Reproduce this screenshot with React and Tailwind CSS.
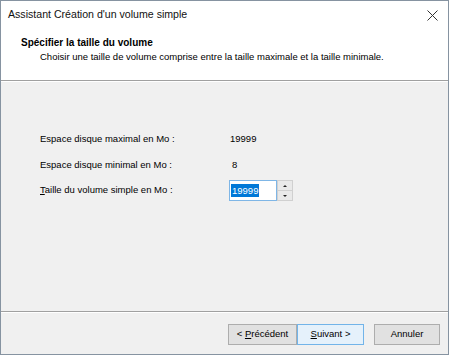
import React from "react";

const font = { fontFamily: '"Liberation Sans", Arial, sans-serif' };

function Spinner() {
  return (
    <div className="flex flex-col w-[16px] h-[21px] border border-[#d0d0d0] bg-[#e9e9e9]">
      <div className="flex-1 flex items-center justify-center border-b border-[#d0d0d0]">
        <span className="w-0 h-0 border-x-[2px] border-x-transparent border-b-[2px] border-b-[#222]" />
      </div>
      <div className="flex-1 flex items-center justify-center">
        <span className="w-0 h-0 border-x-[2px] border-x-transparent border-t-[2px] border-t-[#222]" />
      </div>
    </div>
  );
}

export default function App() {
  return (
    <div className="w-[450px] h-[355px] bg-white" style={font}>
      <div className="w-[449px] h-[355px] flex flex-col border border-[#8693a1] bg-white text-[#1a1a1a]">
        {/* title bar */}
        <div className="h-[28px] flex items-center justify-between pl-[7px] pr-[9px]">
          <span className="text-[10.6px] text-[#111]">Assistant Création d'un volume simple</span>
          <svg width="11" height="11" viewBox="0 0 11 11" className="mr-[1px]">
            <path d="M0.5 0.5 L10.5 10.5 M10.5 0.5 L0.5 10.5" stroke="#333" strokeWidth="1" />
          </svg>
        </div>

        {/* header */}
        <div className="h-[52px] pt-[7px] pl-[20px] border-b border-[#a0a0a0]">
          <p className="text-[10px] font-bold leading-[14px] text-black">Spécifier la taille du volume</p>
          <p className="text-[9.5px] leading-[14px] pl-[19px] text-black">
            Choisir une taille de volume comprise entre la taille maximale et la taille minimale.
          </p>
        </div>

        {/* body */}
        <div className="flex-1 bg-[#f0f0f0] border-t border-white border-b border-b-[#a0a0a0] pl-[39px] pt-[50px] text-[9.5px] text-black">
          <div className="flex items-center h-[14px]">
            <span className="w-[190px]">Espace disque maximal en Mo :</span>
            <span>19999</span>
          </div>
          <div className="flex items-center h-[14px] mt-[12px]">
            <span className="w-[192px]">Espace disque minimal en Mo :</span>
            <span>8</span>
          </div>
          <div className="flex items-center mt-[8px]">
            <span className="w-[189px]">
              <span className="underline">T</span>aille du volume simple en Mo :
            </span>
            <div className="flex">
              <div className="w-[48px] h-[21px] bg-white border border-[#7fb6e6] flex items-center pl-[1px]">
                <span className="bg-[#0078d7] text-white px-[1px] leading-[13px]">19999</span>
              </div>
              <Spinner />
            </div>
          </div>
        </div>

        {/* footer */}
        <div className="h-[42px] bg-[#f0f0f0] border-t border-white flex items-start pt-[11px] pl-[227px] text-[9.5px] text-black">
          <button className="w-[69px] h-[21px] bg-[#e1e1e1] border border-[#adadad]">
            &lt; <span className="underline">P</span>récédent
          </button>
          <button className="w-[67px] h-[21px] bg-[#e5f1fb] border border-[#0078d7]/50">
            <span className="underline">S</span>uivant &gt;
          </button>
          <button className="w-[66px] h-[21px] ml-[10px] bg-[#e1e1e1] border border-[#adadad]">
            Annuler
          </button>
        </div>
      </div>
    </div>
  );
}
